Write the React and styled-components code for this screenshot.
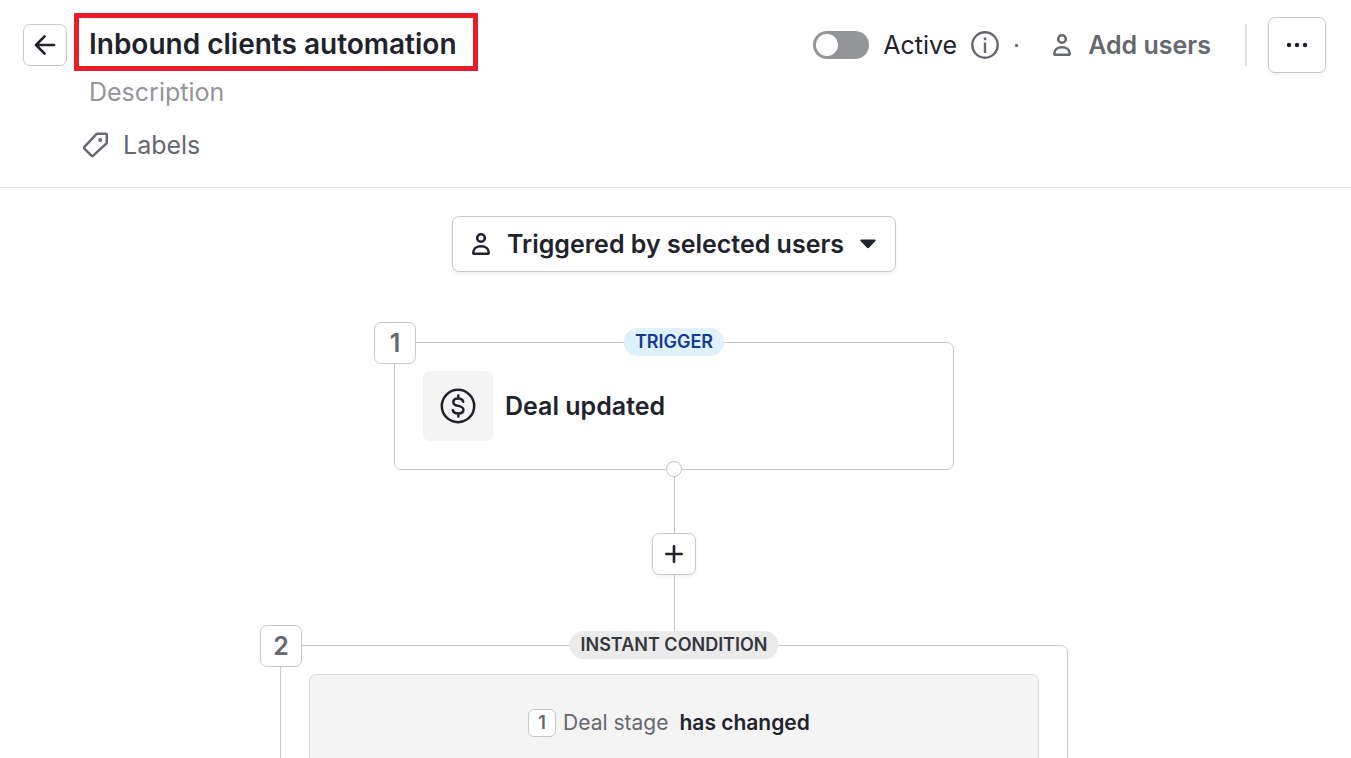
import React, { useState } from "react";

//styled-components
import styled, { createGlobalStyle } from "styled-components";

const GlobalStyle = createGlobalStyle`
  * {
    box-sizing: border-box;
  }

  body {
    margin: 0;
    background-color: #ffffff;
    color: #21232c;
    font-family: Inter, "Liberation Sans", sans-serif;
    font-size: 25px;
  }

  button,
  input {
    font: inherit;
    color: inherit;
  }

  svg {
    display: block;
    flex: none;
  }
`;

const Page = styled.div`
  height: 100vh;
  display: flex;
  flex-direction: column;
  overflow: hidden;
`;

const Header = styled.header`
  flex: none;
  display: flex;
  align-items: flex-start;
  justify-content: space-between;
  padding: 13px 25px 21px 23px;
  border-bottom: 1px solid #e5e5e6;
`;

const HeaderSide = styled.div`
  display: flex;
  align-items: flex-start;
  gap: 7px;
`;

const IconButton = styled.button`
  flex: none;
  display: flex;
  align-items: center;
  justify-content: center;
  width: ${({ $large }) => ($large ? "58px" : "44px")};
  height: ${({ $large }) => ($large ? "56px" : "42px")};
  padding: 0;
  border: 1px solid #c7c8cb;
  border-radius: 7px;
  background-color: #ffffff;
  box-shadow: ${({ $flat }) => ($flat ? "none" : "0 2px 4px rgba(33, 35, 44, 0.06)")};
  cursor: pointer;
`;

const BackSlot = styled.div`
  padding-top: 11px;
`;

const Details = styled.div`
  display: flex;
  flex-direction: column;
  align-items: flex-start;
`;

const Title = styled.h1`
  height: 58px;
  margin: 0;
  padding: 0 16px 0 10px;
  border: 5px solid #ea1c27;
  font-size: 28px;
  font-weight: 600;
  line-height: 52px;
  white-space: nowrap;
`;

const Description = styled.input`
  width: 380px;
  height: 42px;
  margin-bottom: 11px;
  padding: 0 0 0 15px;
  border: none;
  outline: none;
  background: none;

  &::placeholder {
    color: #939598;
    opacity: 1;
  }
`;

const TextButton = styled.button`
  display: flex;
  align-items: center;
  gap: ${({ $gap }) => $gap || "13px"};
  height: 42px;
  padding: 0 8px;
  border: none;
  background: none;
  color: #65686f;
  font-weight: ${({ $bold }) => ($bold ? 600 : 400)};
  white-space: nowrap;
  cursor: pointer;
`;

const Actions = styled.div`
  display: flex;
  align-items: center;
  height: 56px;
  margin-top: 4px;
`;

const SwitchLabel = styled.label`
  display: flex;
  align-items: center;
  gap: 14px;
  margin-right: 14px;
  cursor: pointer;
`;

const Switch = styled.input`
  appearance: none;
  width: 56px;
  height: 28px;
  margin: 0;
  padding: 3px;
  border-radius: 14px;
  background-color: ${({ checked }) => (checked ? "#08a742" : "#939598")};
  cursor: pointer;

  &::before {
    content: "";
    display: block;
    width: 22px;
    height: 22px;
    margin-left: ${({ checked }) => (checked ? "28px" : "0")};
    border-radius: 50%;
    background-color: #ffffff;
  }
`;

const Dot = styled.span`
  width: 3px;
  height: 3px;
  margin: 0 26px 0 16px;
  border-radius: 1px;
  background-color: #65686f;
`;

const Divider = styled.span`
  width: 2px;
  height: 42px;
  margin: 0 21px 0 26px;
  background-color: #e1e1e3;
`;

const Canvas = styled.main`
  flex: 1;
  min-height: 0;
  display: flex;
  flex-direction: column;
  align-items: center;
  padding: 28px 3px 0 0;
  overflow: hidden;
`;

const UsersSelect = styled.button`
  flex: none;
  display: flex;
  align-items: center;
  gap: 16px;
  height: 56px;
  margin-bottom: 70px;
  padding: 0 19px 0 18px;
  border: 1px solid #c7c8cb;
  border-radius: 7px;
  background-color: #ffffff;
  box-shadow: 0 2px 4px rgba(33, 35, 44, 0.06);
  font-weight: 600;
  white-space: nowrap;
  cursor: pointer;
`;

const Step = styled.section`
  flex: none;
  position: relative;
  width: ${({ $wide }) => ($wide ? "788px" : "560px")};
  max-width: 90%;
  min-height: ${({ $wide }) => ($wide ? "240px" : "0")};
  padding: 28px;
  border: 1px solid #c7c8cb;
  border-radius: 7px;
`;

const StepNumber = styled.span`
  position: absolute;
  top: -21px;
  left: -21px;
  display: flex;
  align-items: center;
  justify-content: center;
  width: 42px;
  height: 42px;
  border: 1px solid #c7c8cb;
  border-radius: 7px;
  background-color: #ffffff;
  color: #65686f;
  font-weight: 600;
`;

const Tag = styled.span`
  position: absolute;
  top: -15px;
  left: 50%;
  transform: translateX(-50%);
  padding: 0 11px;
  border-radius: 14px;
  background-color: ${({ $blue }) => ($blue ? "#e0f1fe" : "#ebebeb")};
  color: ${({ $blue }) => ($blue ? "#143a94" : "#35373d")};
  font-size: 18px;
  font-weight: 600;
  line-height: 28px;
  white-space: nowrap;
`;

const Port = styled.span`
  position: absolute;
  bottom: -8px;
  left: 50%;
  width: 16px;
  height: 16px;
  transform: translateX(-50%);
  border: 1px solid #c7c8cb;
  border-radius: 50%;
  background-color: #ffffff;
`;

const EventRow = styled.div`
  display: flex;
  align-items: center;
  gap: 12px;
  font-weight: 600;
`;

const EventIcon = styled.div`
  display: flex;
  align-items: center;
  justify-content: center;
  width: 70px;
  height: 70px;
  border-radius: 7px;
  background-color: #f4f4f4;
`;

const Connector = styled.div`
  flex: none;
  display: flex;
  flex-direction: column;
  align-items: center;
`;

const Line = styled.span`
  width: 1px;
  height: ${({ $height }) => $height};
  background-color: #c7c8cb;
`;

const Panel = styled.div`
  display: flex;
  align-items: flex-start;
  justify-content: center;
  min-height: 180px;
  padding: 33px 10px 0 0;
  border: 1px solid #d9dadc;
  border-radius: 7px;
  background-color: #f4f4f4;
`;

const Condition = styled.p`
  display: flex;
  align-items: center;
  gap: 7px;
  margin: 0;
  color: #65686f;
  font-size: 21px;
  line-height: 30px;
  white-space: nowrap;

  strong {
    margin-left: 4px;
    color: #21232c;
    font-weight: 600;
  }
`;

const ConditionNumber = styled.span`
  width: 28px;
  height: 28px;
  border: 1px solid #c7c8cb;
  border-radius: 6px;
  background-color: #ffffff;
  font-size: 18px;
  font-weight: 600;
  line-height: 26px;
  text-align: center;
`;

const UserIcon = () => (
  <svg width="20" height="24" viewBox="0 0 20 24" fill="none" stroke="currentColor" strokeWidth="2.6">
    <circle cx="10" cy="6" r="3.8" />
    <path d="M2.3 20.4C2.3 16.8 5.6 14.3 10 14.3s7.7 2.5 7.7 6.1c0 .8-.5 1.3-1.3 1.3H3.6c-.8 0-1.3-.5-1.3-1.3z" />
  </svg>
);

const ArrowIcon = () => (
  <svg width="24" height="24" viewBox="0 0 24 24" fill="none" stroke="currentColor" strokeWidth="2.6" strokeLinecap="round" strokeLinejoin="round">
    <path d="M21 12H3.2M11.6 3.4L3 12l8.6 8.6" />
  </svg>
);

const TagIcon = () => (
  <svg width="28" height="28" viewBox="0 0 28 28" fill="none" stroke="currentColor" strokeWidth="2.5" strokeLinejoin="round">
    <path d="M15.6 2.8h8.2c.6 0 1 .4 1 1v7.5c0 .6-.2 1-.6 1.4L11.2 24.7c-.6.6-1.2.6-1.8 0l-7-7c-.5-.5-.5-1.2 0-1.8L14.2 3.4c.4-.4.8-.6 1.4-.6z" />
    <circle cx="18.2" cy="9" r="1.9" fill="currentColor" stroke="none" />
  </svg>
);

const InfoIcon = () => (
  <svg width="28" height="28" viewBox="0 0 28 28" fill="none" stroke="#65686f" strokeWidth="2.4">
    <circle cx="14" cy="14" r="12.7" />
    <path d="M14 11.4v10.6M14 6.4v2.8" />
  </svg>
);

const DollarIcon = () => (
  <svg width="36" height="36" viewBox="0 0 36 36" fill="none" stroke="currentColor" strokeWidth="2.5" strokeLinecap="round">
    <circle cx="18" cy="18" r="16.2" />
    <path d="M18.3 7.6v2.8M18.3 25.4v3.2M23.2 13.8c-.5-2-2.3-3.2-5-3.2-2.9 0-4.9 1.4-4.9 3.6 0 2.3 2 3.1 4.9 3.7 3.1.6 5.2 1.5 5.2 3.9 0 2.3-2.1 3.7-5.2 3.7-3 0-4.9-1.3-5.4-3.4" />
  </svg>
);

const MoreIcon = () => (
  <svg width="22" height="6" viewBox="0 0 22 6" fill="currentColor">
    <circle cx="3" cy="3" r="2.2" />
    <circle cx="11" cy="3" r="2.2" />
    <circle cx="19" cy="3" r="2.2" />
  </svg>
);

const PlusIcon = () => (
  <svg width="20" height="20" viewBox="0 0 20 20" stroke="currentColor" strokeWidth="2.6" strokeLinecap="round">
    <path d="M10 2.3v15.4M2.3 10h15.4" />
  </svg>
);

const CaretIcon = () => (
  <svg width="16" height="10" viewBox="0 0 16 10" fill="currentColor">
    <path d="M1.2.5h13.6c.9 0 1.2.9.6 1.5L9 8.7c-.6.6-1.4.6-2 0L.6 2C0 1.4.3.5 1.2.5z" />
  </svg>
);

const App = () => {
  const [active, setActive] = useState(false);
  const [description, setDescription] = useState("");

  return (
    <Page>
      <GlobalStyle />
      <Header>
        <HeaderSide>
          <BackSlot>
            <IconButton $flat aria-label="Back">
              <ArrowIcon />
            </IconButton>
          </BackSlot>
          <Details>
            <Title>Inbound clients automation</Title>
            <Description
              aria-label="Description"
              placeholder="Description"
              value={description}
              onChange={(e) => setDescription(e.target.value)}
            />
            <TextButton>
              <TagIcon />
              Labels
            </TextButton>
          </Details>
        </HeaderSide>
        <Actions>
          <SwitchLabel>
            <Switch
              type="checkbox"
              role="switch"
              checked={active}
              onChange={() => setActive(!active)}
            />
            Active
          </SwitchLabel>
          <InfoIcon />
          <Dot />
          <TextButton $bold $gap="16px">
            <UserIcon />
            Add users
          </TextButton>
          <Divider />
          <IconButton $large aria-label="More options">
            <MoreIcon />
          </IconButton>
        </Actions>
      </Header>
      <Canvas>
        <UsersSelect aria-haspopup="listbox">
          <UserIcon />
          Triggered by selected users
          <CaretIcon />
        </UsersSelect>
        <Step>
          <StepNumber>1</StepNumber>
          <Tag $blue>TRIGGER</Tag>
          <EventRow>
            <EventIcon>
              <DollarIcon />
            </EventIcon>
            Deal updated
          </EventRow>
          <Port />
        </Step>
        <Connector>
          <Line $height="63px" />
          <IconButton aria-label="Add step">
            <PlusIcon />
          </IconButton>
          <Line $height="70px" />
        </Connector>
        <Step $wide>
          <StepNumber>2</StepNumber>
          <Tag>INSTANT CONDITION</Tag>
          <Panel>
            <Condition>
              <ConditionNumber>1</ConditionNumber>
              Deal stage
              <strong>has changed</strong>
            </Condition>
          </Panel>
        </Step>
      </Canvas>
    </Page>
  );
};

export default App;
